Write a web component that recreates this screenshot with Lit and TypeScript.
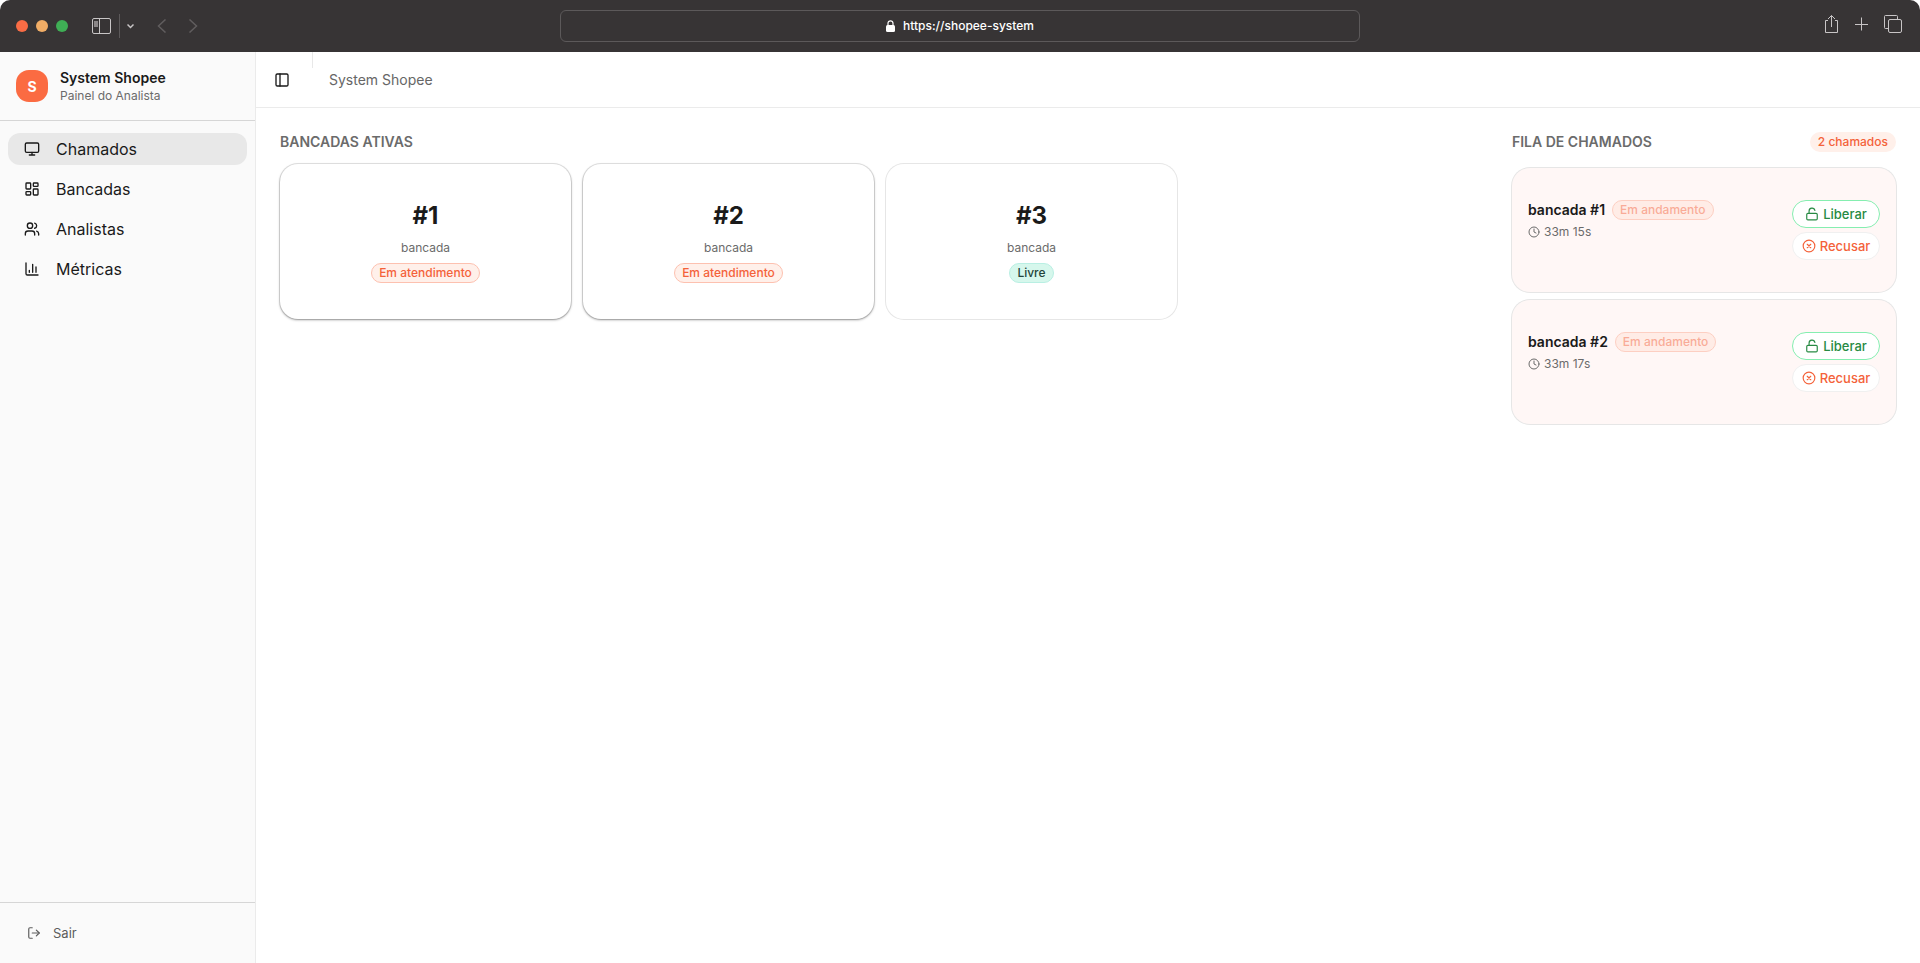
import { LitElement, html, css, svg } from "lit";
import { customElement, property } from "lit/decorators.js";
import { classMap } from "lit/directives/class-map.js";

type Bench = { id: number; busy: boolean };
type Call = { bench: number; elapsed: string };

const shapes = {
  monitor: svg`<rect width="20" height="14" x="2" y="3" rx="2"/><path d="M8 21h8M12 17v4"/>`,
  dashboard: svg`<rect width="7" height="9" x="3" y="3" rx="1"/><rect width="7" height="5" x="14" y="3" rx="1"/><rect width="7" height="9" x="14" y="12" rx="1"/><rect width="7" height="5" x="3" y="16" rx="1"/>`,
  users: svg`<path d="M16 21v-2a4 4 0 0 0-4-4H6a4 4 0 0 0-4 4v2"/><path d="M16 3.128a4 4 0 0 1 0 7.744"/><path d="M22 21v-2a4 4 0 0 0-3-3.87"/><circle cx="9" cy="7" r="4"/>`,
  chart: svg`<path d="M3 3v16a2 2 0 0 0 2 2h16"/><path d="M18 17V9M13 17V5M8 17v-3"/>`,
  logout: svg`<path d="m16 17 5-5-5-5"/><path d="M21 12H9"/><path d="M9 21H5a2 2 0 0 1-2-2V5a2 2 0 0 1 2-2h4"/>`,
  panel: svg`<rect width="18" height="18" x="3" y="3" rx="2"/><path d="M9 3v18"/>`,
  clock: svg`<circle cx="12" cy="12" r="10"/><path d="M12 6v6l4 2"/>`,
  unlock: svg`<rect width="18" height="11" x="3" y="11" rx="2"/><path d="M7 11V7a5 5 0 0 1 9.9-1"/>`,
  reject: svg`<circle cx="12" cy="12" r="10"/><path d="m15 9-6 6M9 9l6 6"/>`,
};

const icon = (name: keyof typeof shapes, size: number) => html`<svg
  width=${size} height=${size} viewBox="0 0 24 24" fill="none" stroke="currentColor"
  stroke-width="2" stroke-linecap="round" stroke-linejoin="round" aria-hidden="true">${shapes[name]}</svg>`;

const base = css`
  *, *::before, *::after { box-sizing: border-box; }
  h1, h2, h3, p, ul { margin: 0; padding: 0; }
  ul { list-style: none; }
  a { color: inherit; text-decoration: none; }
  button { font: inherit; color: inherit; background: none; border: 0; padding: 0; cursor: pointer; }
  svg { display: block; flex: none; }
`;

@customElement("browser-bar")
class BrowserBar extends LitElement {
  static styles = [base, css`
    :host { display: block; }
    .bar {
      display: grid; grid-template-columns: 1fr minmax(0, 800px) 1fr; align-items: center;
      height: 52px; padding: 0 16px; background: #373435; border-radius: 10px 10px 0 0; color: #c8c5c6;
    }
    .left, .right { display: flex; align-items: center; }
    .dots { display: flex; gap: 8px; margin-right: 24px; }
    .dot { width: 12px; height: 12px; border-radius: 50%; }
    .close { background: #f96c45; }
    .min { background: #f1ad66; }
    .max { background: #3fae55; }
    .rule { width: 1px; height: 24px; background: #5c595a; margin: 0 7px 0 8px; }
    .back { margin-left: 23px; color: #605d5e; }
    .next { margin-left: 21px; color: #605d5e; }
    .address {
      display: flex; align-items: center; justify-content: center; gap: 8px;
      height: 32px; border: 1px solid #5c595a; border-radius: 6px; color: #fff;
    }
    .url { font: 500 12px/16px Inter, sans-serif; color: #fff; background: none; border: 0; padding: 0; outline: 0; field-sizing: content; }
    .right { justify-content: flex-end; gap: 15px; padding: 0 2px 4px 0; }
  `];
  render() {
    return html`<header class="bar">
      <div class="left">
        <div class="dots"><span class="dot close"></span><span class="dot min"></span><span class="dot max"></span></div>
        <button aria-label="Barra lateral"><svg width="19" height="16" viewBox="0 0 19 16" fill="none" stroke="currentColor"><rect x=".5" y=".5" width="18" height="15" rx="1.5"/><path d="M7.500 .5v15"/><rect x="2" y="3" width="4" height="6" fill="#8b8788" stroke="none"/></svg></button>
        <span class="rule"></span>
        <button aria-label="Abrir menu"><svg width="7" height="6" viewBox="0 0 7 6" fill="none" stroke="currentColor" stroke-width="1.500"><path d="M.5 1.500l3 3 3-3"/></svg></button>
        <button class="back" aria-label="Voltar"><svg width="10" height="14" viewBox="0 0 10 14" fill="none" stroke="currentColor" stroke-width="1.500"><path d="M8.500 .5L1.500 7l7 6.500"/></svg></button>
        <button class="next" aria-label="Avançar"><svg width="10" height="14" viewBox="0 0 10 14" fill="none" stroke="currentColor" stroke-width="1.500"><path d="M1.500 .5L8.500 7l-7 6.500"/></svg></button>
      </div>
      <label class="address">
        <svg width="9" height="12" viewBox="0 0 9 12" role="img" aria-label="Endereço"><rect x="0" y="5" width="9" height="7" rx="1.500" fill="currentColor"/><path d="M2 6V3.300a2.500 2.500 0 0 1 5 0V6" fill="none" stroke="currentColor" stroke-width="1.200"/></svg>
        <input class="url" type="text" value="https://shopee-system" />
      </label>
      <div class="right">
        <button aria-label="Compartilhar"><svg width="13" height="20" viewBox="1 0 13 20" fill="none" stroke="currentColor"><path d="M4 6.500H1.500v12h12v-12H11M7.500 13V1.500M4 5l3.500-3.500L11 5"/></svg></button>
        <button aria-label="Nova aba"><svg width="16" height="16" viewBox="0 0 16 16" fill="none" stroke="currentColor"><path d="M8.500 1.500v13M2 8.500h13"/></svg></button>
        <button aria-label="Abas"><svg width="18" height="18" viewBox="0 0 18 18" fill="none" stroke="currentColor"><rect x="4.500" y="4.500" width="13" height="13" rx="1.500"/><path d="M4.500 13.500h-3a1 1 0 0 1-1-1v-11a1 1 0 0 1 1-1h11a1 1 0 0 1 1 1v3"/></svg></button>
      </div>
    </header>`;
  }
}

@customElement("side-nav")
class SideNav extends LitElement {
  static styles = [base, css`
    :host { display: flex; flex-direction: column; width: 256px; background: #fafafa; border-right: 1px solid #ebebeb; color: #1a1a1a; }
    .brand { display: flex; align-items: center; gap: 12px; padding: 16px; border-bottom: 1px solid #d6d6d6; }
    .logo { display: grid; place-items: center; width: 32px; height: 32px; border-radius: 13px; background: #fb6b42; color: #fff; font-size: 14px; font-weight: 700; }
    .name { font-size: 14px; line-height: 20px; font-weight: 600; }
    .role { font-size: 12px; line-height: 16px; color: #6b6b6b; }
    .nav { flex: 1; padding: 12px 8px; }
    .list { display: grid; gap: 8px; }
    .item { display: flex; align-items: center; gap: 16px; height: 32px; padding: 0 16px; border-radius: 12px; font-size: 16px; }
    .active { background: #e8e8e8; }
    .foot { padding: 16px 8px; border-top: 1px solid #d6d6d6; }
    .exit { display: flex; align-items: center; gap: 12px; height: 28px; padding: 0 19px; font-size: 13px; color: #5c5c5c; }
  `];
  items = [
    { label: "Chamados", icon: "monitor" },
    { label: "Bancadas", icon: "dashboard" },
    { label: "Analistas", icon: "users" },
    { label: "Métricas", icon: "chart" },
  ] as const;
  render() {
    return html`
      <div class="brand">
        <span class="logo">S</span>
        <div><p class="name">System Shopee</p><p class="role">Painel do Analista</p></div>
      </div>
      <nav class="nav"><ul class="list">
        ${this.items.map((item, i) => html`<li><a href="#" class=${classMap({ item: true, active: i === 0 })}>${icon(item.icon, 16)}${item.label}</a></li>`)}
      </ul></nav>
      <div class="foot"><button class="exit">${icon("logout", 14)}Sair</button></div>`;
  }
}

const badge = css`
  .badge { display: inline-flex; align-items: center; height: 20px; padding: 0 7px; border: 1px solid transparent; border-radius: 10px; font-size: 12px; line-height: 16px; font-weight: 500; white-space: nowrap; }
  .hot { background: #fff0ea; color: #f4623a; border-color: #fdc1b0; }
  .free { background: #d6f7ec; color: #24453b; border-color: #b9efe3; }
  .faded { opacity: 0.5; }
`;

@customElement("bench-card")
class BenchCard extends LitElement {
  static styles = [base, badge, css`
    :host { display: block; }
    .card {
      display: flex; flex-direction: column; align-items: center; padding: 36px 16px;
      background: #fff; border-radius: 18px; box-shadow: 0 0 0 1px #e6e6e6;
    }
    .busy { box-shadow: 0 0 0 1px rgb(0 0 0 / 10%), 0 1px 3px rgb(0 0 0 / 22%), 0 1px 2px rgb(0 0 0 / 18%); }
    .number { font-size: 24px; line-height: 32px; font-weight: 700; color: #1a1a1a; }
    .kind { margin: 8px 0 7px; font-size: 12px; line-height: 16px; color: #6b6b6b; }
  `];
  @property({ attribute: false }) bench!: Bench;
  render() {
    const { id, busy } = this.bench;
    return html`<article class=${classMap({ card: true, busy })}>
      <h3 class="number">#${id}</h3>
      <p class="kind">bancada</p>
      <span class=${classMap({ badge: true, hot: busy, free: !busy })}>${busy ? "Em atendimento" : "Livre"}</span>
    </article>`;
  }
}

@customElement("call-card")
class CallCard extends LitElement {
  static styles = [base, badge, css`
    :host { display: block; }
    .card {
      display: flex; justify-content: space-between; align-items: flex-start; padding: 32px 16px;
      background: #fff7f6; border-radius: 18px; box-shadow: 0 0 0 1px #e6e6e6;
    }
    .top { display: flex; align-items: center; gap: 7px; }
    .title { font-size: 14px; line-height: 20px; font-weight: 600; color: #1a1a1a; }
    .time { display: flex; align-items: center; gap: 4px; margin-top: 4px; font-size: 12px; line-height: 16px; color: #6b6b6b; }
    .faded { background: #ffe3d8; border-color: #fda88f; }
    .actions { display: grid; gap: 4px; }
    .btn {
      display: flex; align-items: center; justify-content: center; gap: 4px; height: 28px; padding: 0 8px; min-width: 88px;
      background: #fff; border: 1px solid #f0f0f0; border-radius: 14px; font-size: 13px; line-height: 20px; font-weight: 500;
    }
    .release { color: #278a43; border-color: #85eeb0; }
    .refuse { color: #f4623a; }
  `];
  @property({ attribute: false }) call!: Call;
  render() {
    return html`<article class="card">
      <div>
        <div class="top"><h3 class="title">bancada #${this.call.bench}</h3><span class="badge hot faded">Em andamento</span></div>
        <p class="time">${icon("clock", 12)}${this.call.elapsed}</p>
      </div>
      <div class="actions">
        <button class="btn release">${icon("unlock", 14)}Liberar</button>
        <button class="btn refuse">${icon("reject", 14)}Recusar</button>
      </div>
    </article>`;
  }
}

@customElement("app-root")
class AppRoot extends LitElement {
  static styles = [base, badge, css`
    :host { display: flex; flex-direction: column; min-height: 100vh; background: #fff; font-family: Inter, sans-serif; color: #1a1a1a; }
    .shell { flex: 1; display: grid; grid-template-columns: auto minmax(0, 1fr); }
    .top { display: flex; align-items: center; height: 56px; padding: 0 18px; border-bottom: 1px solid #ebebeb; }
    .rule { align-self: flex-start; width: 1px; height: 16px; margin: 0 16px 0 22px; background: #e8e8e8; }
    .crumb { font-size: 14px; line-height: 20px; color: #666; }
    .content { display: grid; grid-template-columns: minmax(0, 1fr) 384px; gap: 32px; padding: 24px; }
    .heading { font-size: 14px; line-height: 20px; font-weight: 600; color: #6b6b6b; text-transform: uppercase; }
    .benches { display: grid; grid-template-columns: repeat(4, minmax(0, 1fr)); gap: 12px; margin-top: 12px; }
    .queue-head { display: flex; align-items: center; justify-content: space-between; }
    .queue { display: grid; gap: 8px; margin-top: 16px; }
    .count { background: #fff0ea; color: #f4623a; }
  `];
  benches: Bench[] = [{ id: 1, busy: true }, { id: 2, busy: true }, { id: 3, busy: false }];
  calls: Call[] = [{ bench: 1, elapsed: "33m 15s" }, { bench: 2, elapsed: "33m 17s" }];
  render() {
    return html`
      <browser-bar></browser-bar>
      <div class="shell">
        <side-nav></side-nav>
        <div>
          <header class="top">
            <button aria-label="Alternar menu">${icon("panel", 16)}</button>
            <span class="rule"></span>
            <span class="crumb">System Shopee</span>
          </header>
          <main class="content">
            <section>
              <h2 class="heading">Bancadas ativas</h2>
              <div class="benches">${this.benches.map((b) => html`<bench-card .bench=${b}></bench-card>`)}</div>
            </section>
            <aside>
              <div class="queue-head"><h2 class="heading">Fila de chamados</h2><span class="badge count">${this.calls.length} chamados</span></div>
              <div class="queue">${this.calls.map((c) => html`<call-card .call=${c}></call-card>`)}</div>
            </aside>
          </main>
        </div>
      </div>`;
  }
}
